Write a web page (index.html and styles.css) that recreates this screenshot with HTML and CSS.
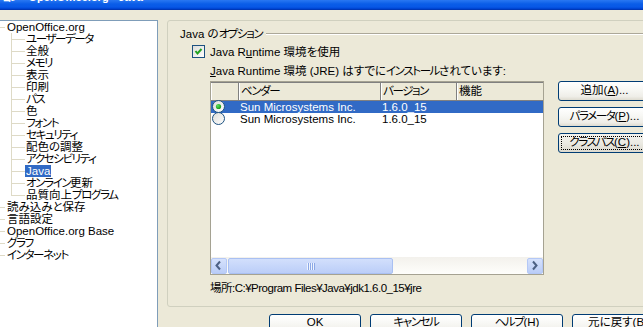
FILE: index.html
```html
<!DOCTYPE html>
<html lang="ja">
<head>
<meta charset="utf-8">
<title>オプション - OpenOffice.org - Java</title>
<link rel="stylesheet" href="styles.css">
</head>
<body>
<div class="window">
  <div class="titlebar"><span class="title"><span class="k">オプション</span> - OpenOffice.org - Java</span></div>
  <div class="main">
    <div class="tree">
      <div class="node top"><span class="conn"></span><span class="label">OpenOffice.org</span></div>
      <div class="children">
        <div class="node child"><span class="conn"></span><span class="label k">ユーザーデータ</span></div>
        <div class="node child"><span class="conn"></span><span class="label">全般</span></div>
        <div class="node child"><span class="conn"></span><span class="label k">メモリ</span></div>
        <div class="node child"><span class="conn"></span><span class="label">表示</span></div>
        <div class="node child"><span class="conn"></span><span class="label">印刷</span></div>
        <div class="node child"><span class="conn"></span><span class="label k">パス</span></div>
        <div class="node child"><span class="conn"></span><span class="label">色</span></div>
        <div class="node child"><span class="conn"></span><span class="label k">フォント</span></div>
        <div class="node child"><span class="conn"></span><span class="label k">セキュリティ</span></div>
        <div class="node child"><span class="conn"></span><span class="label">配色の調整</span></div>
        <div class="node child"><span class="conn"></span><span class="label k">アクセシビリティ</span></div>
        <div class="node child"><span class="conn"></span><span class="label selected">Java</span></div>
        <div class="node child"><span class="conn"></span><span class="label"><span class="k">オンライン</span>更新</span></div>
        <div class="node child last"><span class="conn"></span><span class="label">品質向上<span class="k">プログラム</span></span></div>
      </div>
      <div class="node top"><span class="conn"></span><span class="label">読み込みと保存</span></div>
      <div class="node top"><span class="conn"></span><span class="label">言語設定</span></div>
      <div class="node top"><span class="conn"></span><span class="label">OpenOffice.org Base</span></div>
      <div class="node top"><span class="conn"></span><span class="label k">グラフ</span></div>
      <div class="node top"><span class="conn"></span><span class="label k">インターネット</span></div>
    </div>

    <div class="content">
      <div class="box">
        <div class="group-head"><span class="group-title">Java の<span class="k">オプション</span></span><span class="rule"></span></div>
        <div class="check-row">
          <svg class="checkbox" width="13" height="13" viewBox="0 0 13 13">
            <defs>
              <linearGradient id="cbg" x1="0" y1="0" x2="1" y2="1">
                <stop offset="0" stop-color="#DCDCD7"/>
                <stop offset="1" stop-color="#FFFFFF"/>
              </linearGradient>
            </defs>
            <rect x="0.5" y="0.5" width="12" height="12" fill="url(#cbg)" stroke="#1C5180"/>
            <polyline points="3.5,6 5.5,8.5 9.5,4" fill="none" stroke="#21A121" stroke-width="2"/>
          </svg>
          <span>Java R<u>u</u>ntime 環境を使用</span>
        </div>
        <div class="jre-label"><u>J</u>ava Runtime 環境 (JRE) はすでに<span class="k">インストール</span>されています:</div>
        <div class="list-area">
          <div class="list-col">
            <div class="list">
              <div class="list-head">
                <div class="hcell c-radio"></div>
                <div class="hcell c-vendor k">ベンダー</div>
                <div class="hcell c-version k">バージョン</div>
                <div class="hcell c-feature">機能</div>
              </div>
              <div class="row selected">
                <div class="cell c-radio">
                  <svg width="13" height="13" viewBox="0 0 13 13">
                    <defs>
                      <linearGradient id="rbg" x1="0" y1="0" x2="1" y2="1">
                        <stop offset="0" stop-color="#DCDCD7"/>
                        <stop offset="1" stop-color="#FFFFFF"/>
                      </linearGradient>
                      <radialGradient id="dot" cx="0.35" cy="0.35" r="0.7">
                        <stop offset="0" stop-color="#5BE35B"/>
                        <stop offset="1" stop-color="#169416"/>
                      </radialGradient>
                    </defs>
                    <circle cx="6.5" cy="6.5" r="6" fill="url(#rbg)" stroke="#1C5180"/>
                    <circle cx="6.5" cy="6.5" r="2.6" fill="url(#dot)"/>
                  </svg>
                </div>
                <div class="cell c-vendor">Sun Microsystems Inc.</div>
                <div class="cell c-version">1.6.0_15</div>
                <div class="cell c-feature"></div>
              </div>
              <div class="row">
                <div class="cell c-radio">
                  <svg width="13" height="13" viewBox="0 0 13 13">
                    <circle cx="6.5" cy="6.5" r="6" fill="url(#rbg)" stroke="#1C5180"/>
                  </svg>
                </div>
                <div class="cell c-vendor">Sun Microsystems Inc.</div>
                <div class="cell c-version">1.6.0_15</div>
                <div class="cell c-feature"></div>
              </div>
              <div class="list-body"></div>
              <div class="hscroll">
                <div class="sb-btn">
                  <svg width="15" height="15" viewBox="0 0 15 15"><polyline points="9,3.5 5.5,7.5 9,11.5" fill="none" stroke="#4D6185" stroke-width="2"/></svg>
                </div>
                <div class="sb-track">
                  <div class="sb-thumb"><span class="grip"></span></div>
                </div>
                <div class="sb-btn">
                  <svg width="15" height="15" viewBox="0 0 15 15"><polyline points="6,3.5 9.5,7.5 6,11.5" fill="none" stroke="#4D6185" stroke-width="2"/></svg>
                </div>
              </div>
            </div>
            <div class="path">場所:C:¥Program Files¥Java¥jdk1.6.0_15¥jre</div>
          </div>
          <div class="side">
            <div class="btn">追加(<u>A</u>)...</div>
            <div class="btn"><span class="k">パラメータ</span>(<u>P</u>)...</div>
            <div class="btn focus"><span class="k">クラスパス</span>(<u>C</u>)...</div>
          </div>
        </div>
      </div>
      <div class="bottom">
        <div class="btn wide">OK</div>
        <div class="btn wide"><span class="k">キャンセル</span></div>
        <div class="btn wide"><span class="k">ヘルプ</span>(<u>H</u>)</div>
        <div class="btn wide">元に戻す(<u>B</u>)</div>
      </div>
    </div>
  </div>
</div>
</body>
</html>
```

FILE: styles.css
```css
html, body {
  margin: 0;
  padding: 0;
}

body {
  width: 643px;
  height: 327px;
  overflow: hidden;
  background: #ECE9D8;
  color: #000;
  font-family: "Liberation Sans", "Noto Sans CJK JP", sans-serif;
  font-size: 11.5px;
  font-feature-settings: "palt";
  line-height: 12px;
}

/* narrow katakana runs (the original uses a proportional UI font) */
.k {
  letter-spacing: -1.4px;
}

.window {
  width: 643px;
  height: 327px;
  overflow: hidden;
}

/* title bar (only its lower edge is visible) */
.titlebar {
  height: 10px;
  overflow: hidden;
  background: linear-gradient(#2A78F2 0%, #0A5DE8 40%, #0858E6 70%, #0046D4 85%, #0030A8 100%);
  color: #fff;
  font-weight: bold;
  font-size: 11px;
  white-space: nowrap;
}

.title {
  display: block;
  line-height: 11px;
  margin-top: -8px;
  margin-left: -24px;
}

.main {
  display: flex;
  padding-top: 10px;
}

/* tree */
.tree {
  box-sizing: border-box;
  width: 159px;
  height: 320px;
  margin-left: -1px;
  background: #fff;
  border: 1px solid #7F9DB9;
  flex: none;
}

.node {
  display: flex;
  align-items: center;
  height: 12px;
  white-space: nowrap;
}

.conn {
  display: block;
  flex: none;
  height: 12px;
}

.top .conn {
  width: 6px;
  background: linear-gradient(#DEDAC6, #DEDAC6) 0 6px / 5px 1px no-repeat;
}

.child .conn {
  width: 25px;
  background:
    linear-gradient(#DEDAC6, #DEDAC6) 11px 0 / 1px 12px no-repeat,
    linear-gradient(#DEDAC6, #DEDAC6) 11px 6px / 14px 1px no-repeat;
}

.child.last .conn {
  background:
    linear-gradient(#DEDAC6, #DEDAC6) 11px 0 / 1px 7px no-repeat,
    linear-gradient(#DEDAC6, #DEDAC6) 11px 6px / 14px 1px no-repeat;
}

.label {
  padding: 0 1px;
  height: 12px;
}

.label.selected {
  background: #316AC5;
  color: #fff;
}

/* right content */
.content {
  margin-left: 9px;
  flex: none;
}

.box {
  box-sizing: border-box;
  width: 520px;
  height: 287px;
  border: 1px solid #D0D0BF;
  border-radius: 3px;
  padding-top: 7px;
}

.group-head {
  display: flex;
  align-items: center;
  height: 12px;
  margin-left: 12px;
  white-space: nowrap;
}

.rule {
  flex: 1;
  margin-left: 4px;
  border-top: 1px solid #ACA899;
  border-bottom: 1px solid #fff;
}

.check-row {
  display: flex;
  align-items: center;
  height: 13px;
  margin: 5px 0 0 24px;
  white-space: nowrap;
}

.checkbox {
  display: block;
  margin-right: 5px;
}

.jre-label {
  margin: 7px 0 0 42px;
  white-space: nowrap;
}

.list-area {
  display: flex;
  margin: 4px 0 0 42px;
}

.list-col {
  flex: none;
  width: 334px;
}

.list {
  box-sizing: border-box;
  width: 334px;
  height: 194px;
  border: 1px solid #A5A292;
  background: #fff;
  display: flex;
  flex-direction: column;
}

.list-head {
  display: flex;
  height: 19px;
  box-sizing: border-box;
  background: #ECE9D8;
  border-top: 1px solid #808080;
  border-bottom: 1px solid #808080;
  flex: none;
}

.hcell {
  box-sizing: border-box;
  border-right: 1px solid #808080;
  box-shadow: inset 1px 0 0 #fff;
  padding-left: 2px;
  line-height: 17px;
  white-space: nowrap;
}

.c-radio { width: 28px; }
.c-vendor { width: 142px; }
.c-version { width: 76px; }
.c-feature { width: 86px; border-right: none; }

.row {
  display: flex;
  height: 12px;
  flex: none;
}

.row .cell {
  box-sizing: border-box;
  height: 12px;
  line-height: 12px;
  padding-left: 1px;
  white-space: nowrap;
}

.row .c-radio svg {
  display: block;
  margin-top: -1px;
}

.row.selected {
  background: #316AC5;
  color: #fff;
}

.list-body {
  flex: 1;
}

.hscroll {
  display: flex;
  height: 17px;
  flex: none;
  background: linear-gradient(#F3F1EC, #FEFEFB);
}

.sb-btn {
  box-sizing: border-box;
  width: 16px;
  height: 16px;
  margin: 1px 0 0 0;
  border: 1px solid #B4C8F6;
  border-radius: 2px;
  background: linear-gradient(#D6E2FC, #BACDF7);
  flex: none;
}

.sb-btn svg {
  display: block;
  margin: -1px 0 0 -1px;
}

.sb-track {
  flex: 1;
  display: flex;
  padding: 1px 0 0 1px;
}

.sb-thumb {
  box-sizing: border-box;
  width: 165px;
  height: 16px;
  border: 1px solid #A9C0F2;
  border-radius: 2px;
  background: linear-gradient(#D2DFFC, #BBCEF8);
  display: flex;
  align-items: center;
  justify-content: center;
}

.grip {
  display: block;
  width: 8px;
  height: 7px;
  background: repeating-linear-gradient(90deg, #EEF4FE 0 1px, #8CA8E6 1px 2px);
}

.path {
  margin-top: 7px;
  white-space: nowrap;
  letter-spacing: -0.5px;
}

/* buttons */
.side {
  display: flex;
  flex-direction: column;
  gap: 6px;
  margin-left: 14px;
}

.btn {
  box-sizing: border-box;
  width: 93px;
  height: 20px;
  border: 1px solid #003C74;
  border-radius: 3px;
  background: linear-gradient(#FFFFFF 0%, #F8F8F5 40%, #EFEEE8 80%, #DEDBD0 100%);
  text-align: center;
  line-height: 16px;
  white-space: nowrap;
  flex: none;
}

.btn.focus {
  background: linear-gradient(#F4F3EE 0%, #EBEAE3 50%, #DCD9CE 100%);
  outline: 1px dotted #000;
  outline-offset: -4px;
}

.bottom {
  display: flex;
  gap: 9px;
  margin: 7px 0 0 102px;
}

.btn.wide {
  width: 92px;
  height: 22px;
  line-height: 14px;
}
```
